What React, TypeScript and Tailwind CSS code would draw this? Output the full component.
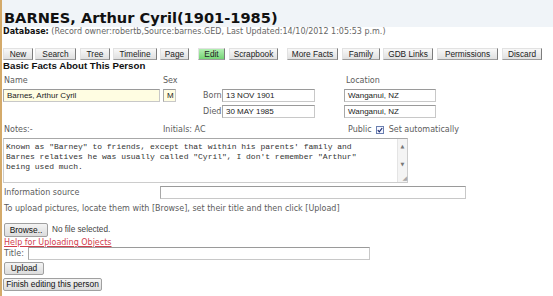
import React from 'react'

const TABS = [
  { label: 'New', cls: 'ml-[1px] w-[30px]' },
  { label: 'Search', cls: 'ml-[2px] w-[41px]' },
  { label: 'Tree', cls: 'ml-[4px] w-[30px]' },
  { label: 'Timeline', cls: 'ml-[3px] w-[44px]' },
  { label: 'Page', cls: 'ml-[3px] w-[29px]' },
  { label: 'Edit', cls: 'ml-[9px] w-[27px]', active: true },
  { label: 'Scrapbook', cls: 'ml-[4px] w-[49px]' },
  { label: 'More Facts', cls: 'ml-[9px] w-[51px]' },
  { label: 'Family', cls: 'ml-[4px] w-[38px]' },
  { label: 'GDB Links', cls: 'ml-[3px] w-[50px]' },
  { label: 'Permissions', cls: 'ml-[4px] w-[61px]' },
  { label: 'Discard', cls: 'ml-[4px] w-[40px]' },
]

const arial = "font-['Liberation_Sans',Arial,sans-serif]"

function Field({ value, cls, yellow }: { value?: string; cls: string; yellow?: boolean }) {
  return (
    <div
      className={`${cls} h-[13px] border border-[#c8c8c8] border-t-[#9a9a9a] border-l-[#a8a8a8] pl-[3px] flex items-center text-[8px] text-[#222] ${arial} ${
        yellow ? 'bg-[#fffde2]' : 'bg-white'
      }`}
    >
      {value}
    </div>
  )
}

function Btn({ label, cls }: { label: string; cls: string }) {
  return (
    <div
      className={`${cls} flex items-center justify-center rounded-[2px] border border-[#a0a0a0] bg-gradient-to-b from-[#f4f4f4] to-[#dcdcdc] text-[8.4px] text-[#111] ${arial}`}
    >
      {label}
    </div>
  )
}

export default function App() {
  return (
    <div className="w-[553px] h-[296px] overflow-hidden bg-white border-l-2 border-[#d4aa6a] font-['DejaVu_Sans',Verdana,sans-serif] text-[8px] text-[#5c5c5c]">
      {/* heading */}
      <div className="h-[27px] bg-[#f0f4f8] pt-[9px] pl-[2px]">
        <h1 className="text-[14.6px] leading-[18px] font-bold text-[#111]">BARNES, Arthur Cyril(1901-1985)</h1>
      </div>
      <div className="pl-[1px] leading-[10px] text-[#666]">
        <span className="font-bold text-[#111]">Database:</span> (Record owner:robertb,Source:barnes.GED, Last Updated:14/10/2012 1:05:53 p.m.)
      </div>

      {/* tabs */}
      <div className="mt-[11px] flex h-[12px]">
        {TABS.map((t) => (
          <div
            key={t.label}
            className={`${t.cls} flex items-center justify-center border border-[#e2e2e2] border-r-[#7c7c7c] border-b-[#9c9c9c] text-[8.3px] text-[#222] ${arial} ${
              t.active ? 'bg-gradient-to-b from-[#b4efb4] to-[#74d474]' : 'bg-gradient-to-b from-[#f8f8f8] to-[#e0e0e0]'
            }`}
          >
            {t.label}
          </div>
        ))}
      </div>

      <h2 className={`pl-[1px] text-[9.7px] leading-[11px] font-bold text-[#111] ${arial}`}>Basic Facts About This Person</h2>

      {/* labels */}
      <div className="mt-[5px] flex leading-[10px]">
        <span className="ml-[2px] w-[159px]">Name</span>
        <span className="w-[183px]">Sex</span>
        <span>Location</span>
      </div>

      <div className="mt-[3px] flex items-center">
        <Field cls="ml-[1px] w-[157px]" value="Barnes, Arthur Cyril" yellow />
        <Field cls="ml-[3px] w-[13px]" value="M" yellow />
        <span className="ml-[27px] w-[19px]">Born</span>
        <Field cls="w-[93px]" value="13 NOV 1901" />
        <Field cls="ml-[29px] w-[92px]" value="Wanganui, NZ" />
      </div>
      <div className="mt-[3px] flex items-center">
        <span className="ml-[201px] w-[19px]">Died</span>
        <Field cls="w-[93px]" value="30 MAY 1985" />
        <Field cls="ml-[29px] w-[92px]" value="Wanganui, NZ" />
      </div>

      <div className="mt-[6px] flex items-center h-[11px] leading-[10px]">
        <span className="ml-[2px] w-[159px]">Notes:-</span>
        <span className="w-[185px]">Initials: AC</span>
        <span>Public</span>
        <svg className="ml-[4px]" width="8" height="8" viewBox="0 0 8 8">
          <rect x="0.5" y="0.5" width="7" height="7" fill="#f4f6ff" stroke="#6a7fb0" />
          <path d="M1.8 4.2 L3.3 5.8 L6.2 2" fill="none" stroke="#1a2a70" strokeWidth="1.2" />
        </svg>
        <span className="ml-[5px]">Set automatically</span>
      </div>

      {/* notes */}
      <div className="mt-[3px] ml-[1px] w-[405px] h-[45px] flex border border-[#cccccc] border-t-[#a8a8a8]">
        <div className="flex-1 px-[2px] pt-[3px] font-['Liberation_Mono','Courier_New',monospace] text-[8px] leading-[10px] text-[#333]">
          Known as "Barney" to friends, except that within his parents' family and
          <br />
          Barnes relatives he was usually called "Cyril", I don't remember "Arthur"
          <br />
          being used much.
        </div>
        <div className="w-[10px] bg-[#f4f4f4] border-l border-[#e4e4e4] flex flex-col items-center text-[5px] text-[#777]">
          <span className="mt-[4px]">▲</span>
          <span className="mt-[10px]">▼</span>
          <span className="mt-auto mb-[1px] self-end text-[6px] text-[#aaa] leading-[6px]">◢</span>
        </div>
      </div>

      <div className="mt-[3px] flex items-center">
        <span className="ml-[2px] w-[156px]">Information source</span>
        <Field cls="w-[306px]" />
      </div>

      <div className="mt-[5px] pl-[2px] leading-[10px]">To upload pictures, locate them with [Browse], set their title and then click [Upload]</div>

      <div className="mt-[9px] flex items-center">
        <Btn label="Browse.." cls="ml-[2px] w-[44px] h-[14px]" />
        <span className={`ml-[4px] text-[8.2px] text-[#444] ${arial}`}>No file selected.</span>
      </div>
      <a className="block mt-[1px] pl-[2px] leading-[9px] text-[#d2404e] underline">Help for Uploading Objects</a>

      <div className="flex items-center">
        <span className="ml-[2px] w-[24px]">Title:</span>
        <Field cls="w-[342px]" />
      </div>

      <Btn label="Upload" cls="mt-[2px] ml-[2px] w-[40px] h-[13px]" />
      <Btn label="Finish editing this person" cls="mt-[3px] ml-[1px] w-[99px] h-[13px]" />
    </div>
  )
}
